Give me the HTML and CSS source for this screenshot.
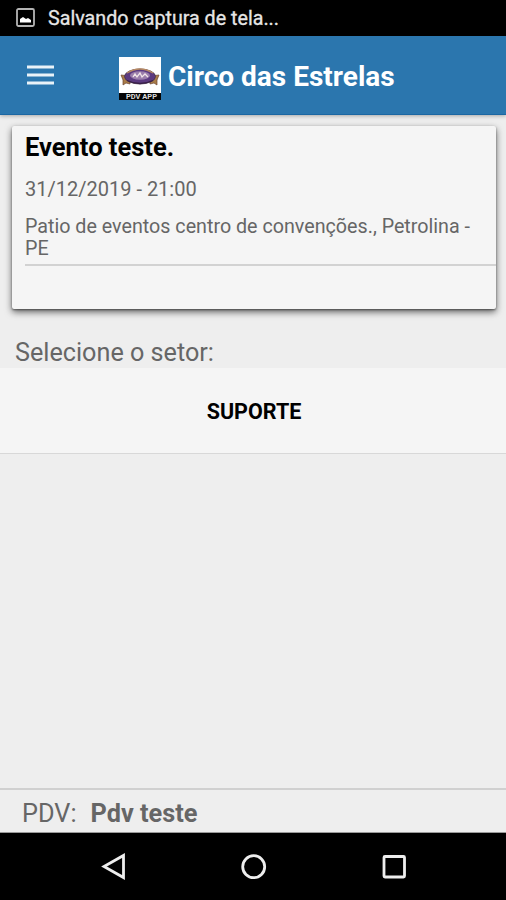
FILE: index.html
```html
<!DOCTYPE html>
<html lang="pt-BR">
<head>
    <meta charset="UTF-8">
    <meta name="viewport" content="width=device-width, initial-scale=1.0">
    <title>Circo das Estrelas</title>
    <link rel="stylesheet" href="styles.css">
</head>
<body>
    <div class="app">
        <div class="status-bar">
            <svg class="status-icon" width="19" height="19" viewBox="0 0 19 19">
                <rect x="1" y="1" width="17" height="17" rx="1.5" fill="none" stroke="#b4b4b4" stroke-width="1.8"/>
                <path d="M4 14.500V11l3-2 3 2 2-1 3 2v2.500z" fill="#fff"/>
            </svg>
            <span class="status-text">Salvando captura de tela...</span>
        </div>

        <header class="toolbar">
            <svg class="menu-icon" width="27" height="20" viewBox="0 0 27 20">
                <path d="M0 2h27M0 10h27M0 18h27" stroke="#e9f2f8" stroke-width="2.8"/>
            </svg>
            <svg class="logo" width="42" height="43" viewBox="0 0 42 43">
                <rect width="42" height="37" fill="#fff"/>
                <rect y="36" width="42" height="7" fill="#050505"/>
                <path d="M2 18l9 1v8l-4-1-3 2v-5zM40 18l-9 1v8l4-1 3 2v-5z" fill="#a97c48" stroke="#6d4630" stroke-width="0.7"/>
                <ellipse cx="21" cy="19.500" rx="15.500" ry="7.500" fill="#5c3a80" stroke="#463246" stroke-width="0.8"/>
                <path d="M8 16q13-8 26 0" fill="none" stroke="#b78a64" stroke-width="1.300"/>
                <ellipse cx="21" cy="18.500" rx="10" ry="4.200" fill="#9c7fac"/>
                <path d="M14 20l2-3 2 3 3-4 2 4 3-3 3 3" fill="none" stroke="#f2e6e8" stroke-width="1.300"/>
                <path d="M8 23.500q13 6 26 0" fill="none" stroke="#382047" stroke-width="1.300"/>
                <text class="logo-text" x="22.500" y="41.500" text-anchor="middle">PDV APP</text>
            </svg>
            <h1>Circo das Estrelas</h1>
        </header>

        <main class="content">
            <section class="event-card">
                <h2>Evento teste.</h2>
                <p class="event-date">31/12/2019 - 21:00</p>
                <p class="event-place">Patio de eventos centro de convenções., Petrolina - PE</p>
            </section>

            <p class="sector-label">Selecione o setor:</p>
            <div class="sector-item">SUPORTE</div>
        </main>

        <footer class="pdv-bar">
            <span>PDV:</span>
            <strong>Pdv teste</strong>
        </footer>

        <nav class="nav-bar">
            <svg width="28" height="28" viewBox="0 0 28 28">
                <path d="M23.500 2.500v22L4 13.500z"/>
            </svg>
            <svg width="28" height="28" viewBox="0 0 28 28">
                <circle cx="13.700" cy="13.700" r="11"/>
            </svg>
            <svg width="28" height="28" viewBox="0 0 28 28">
                <rect x="4" y="3.500" width="20.500" height="20.500" rx="1"/>
            </svg>
        </nav>
    </div>
</body>
</html>
```
FILE: styles.css
```css
* {
    box-sizing: border-box;
}

body {
    margin: 0;
    font-family: Roboto, "Liberation Sans", sans-serif;
    background-color: #eee;
    color: #666;
}

h1, h2, p {
    margin: 0;
}

.app {
    display: flex;
    flex-direction: column;
    height: 900px;
    overflow: hidden;
}

.status-bar {
    display: flex;
    align-items: center;
    flex: 0 0 36px;
    padding-left: 16px;
    background-color: #000;
    color: #e6e6e6;
}

.status-icon {
    margin-bottom: 1px;
}

.status-text {
    margin-left: 13px;
    font-size: 19.7px;
    -webkit-text-stroke: 0.3px #e6e6e6;
}

.toolbar {
    display: flex;
    align-items: center;
    flex: 0 0 79px;
    padding-left: 27px;
    background-color: #2b76ae;
    border-bottom: 1px solid #1b67a3;
    box-shadow: 0 1px 4px rgba(0, 0, 0, 0.3);
    color: #fff;
}

.logo {
    margin: 6px 7px 0 65px;
}

.logo-text {
    font-size: 7.5px;
    font-weight: bold;
    fill: #ddd;
}

.toolbar h1 {
    margin-top: 3px;
    font-size: 28px;
    line-height: 32px;
}

.content {
    flex: 1;
}

.event-card {
    height: 183px;
    margin: 11px 10px 0 12px;
    padding: 6px 0 0 13px;
    background-color: #f5f5f5;
    border-radius: 2px;
    box-shadow: 0 3px 7px rgba(0, 0, 0, 0.6), 0 1px 2px rgba(0, 0, 0, 0.4);
}

.event-card h2 {
    font-size: 25.5px;
    line-height: 30px;
    color: #000;
}

.event-date {
    margin-top: 15px;
    font-size: 20px;
    line-height: 24px;
}

.event-place {
    margin-top: 15px;
    padding-right: 12px;
    padding-bottom: 4px;
    border-bottom: 2px solid #d2d2d2;
    font-size: 19.7px;
    line-height: 22px;
}

.sector-label {
    height: 59px;
    padding: 29px 0 0 15px;
    font-size: 25.2px;
    line-height: 30px;
}

.sector-item {
    display: flex;
    align-items: center;
    justify-content: center;
    height: 86px;
    padding: 2px 0 0 2px;
    background-color: #f5f5f5;
    border-bottom: 1px solid #d8d8d8;
    font-size: 21.5px;
    font-weight: bold;
    color: #000;
}

.pdv-bar {
    display: flex;
    align-items: center;
    flex: 0 0 45px;
    gap: 14px;
    padding: 5px 0 0 22px;
    border-top: 2px solid #d0d0d0;
    border-bottom: 1px solid #999;
    font-size: 25.3px;
}

.nav-bar {
    display: flex;
    align-items: center;
    justify-content: center;
    flex: 0 0 67px;
    gap: 112px;
    padding-left: 1px;
    background-color: #000;
}

.nav-bar svg {
    fill: none;
    stroke: #eee;
    stroke-width: 2.8;
}
```
